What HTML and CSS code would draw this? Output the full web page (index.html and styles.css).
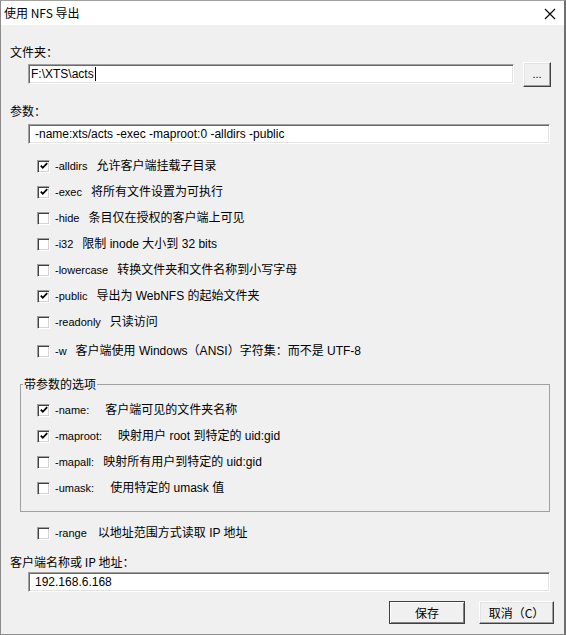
FILE: index.html
```html
<!DOCTYPE html>
<html lang="zh-CN">
<head>
<meta charset="utf-8">
<title>使用 NFS 导出</title>
<link rel="stylesheet" href="styles.css">
</head>
<body>
<div class="window">
  <div class="titlebar">
    <span class="title">使用 NFS 导出</span>
    <svg class="close" width="12" height="12" viewBox="0 0 12 12"><path d="M1 1 L11 11 M11 1 L1 11" stroke="#000" stroke-width="1.1" fill="none"/></svg>
  </div>
  <div class="content">
    <div class="label lbl-folder">文件夹：</div>
    <div class="folder-row">
      <div class="edit edit-folder">F:\XTS\acts<span class="caret"></span></div>
      <button class="btn btn-browse">...</button>
    </div>
    <div class="label lbl-params">参数：</div>
    <div class="edit edit-params">-name:xts/acts -exec -maproot:0 -alldirs -public</div>

    <div class="options">
      <div class="check"><span class="box on"><svg width="8" height="8" viewBox="0 0 8 8"><polyline points="0.8,3.6 2.8,5.8 7.2,1.2" fill="none" stroke="#000" stroke-width="1.8"/></svg></span><span class="opt">-alldirs</span><span class="desc">允许客户端挂载子目录</span></div>
      <div class="check"><span class="box on"><svg width="8" height="8" viewBox="0 0 8 8"><polyline points="0.8,3.6 2.8,5.8 7.2,1.2" fill="none" stroke="#000" stroke-width="1.8"/></svg></span><span class="opt">-exec</span><span class="desc">将所有文件设置为可执行</span></div>
      <div class="check"><span class="box"></span><span class="opt">-hide</span><span class="desc">条目仅在授权的客户端上可见</span></div>
      <div class="check"><span class="box"></span><span class="opt">-i32</span><span class="desc">限制 inode 大小到 32 bits</span></div>
      <div class="check"><span class="box"></span><span class="opt">-lowercase</span><span class="desc">转换文件夹和文件名称到小写字母</span></div>
      <div class="check"><span class="box on"><svg width="8" height="8" viewBox="0 0 8 8"><polyline points="0.8,3.6 2.8,5.8 7.2,1.2" fill="none" stroke="#000" stroke-width="1.8"/></svg></span><span class="opt">-public</span><span class="desc">导出为 WebNFS 的起始文件夹</span></div>
      <div class="check"><span class="box"></span><span class="opt">-readonly</span><span class="desc">只读访问</span></div>
      <div class="check last"><span class="box"></span><span class="opt">-w</span><span class="desc">客户端使用 Windows（ANSI）字符集：而不是 UTF-8</span></div>
    </div>

    <fieldset class="group">
      <legend>带参数的选项</legend>
      <div class="group-rows">
        <div class="check"><span class="box on"><svg width="8" height="8" viewBox="0 0 8 8"><polyline points="0.8,3.6 2.8,5.8 7.2,1.2" fill="none" stroke="#000" stroke-width="1.8"/></svg></span><span class="opt">-name:</span><span class="desc wide">客户端可见的文件夹名称</span></div>
        <div class="check"><span class="box on"><svg width="8" height="8" viewBox="0 0 8 8"><polyline points="0.8,3.6 2.8,5.8 7.2,1.2" fill="none" stroke="#000" stroke-width="1.8"/></svg></span><span class="opt">-maproot:</span><span class="desc wide">映射用户 root 到特定的 uid:gid</span></div>
        <div class="check"><span class="box"></span><span class="opt">-mapall:</span><span class="desc">映射所有用户到特定的 uid:gid</span></div>
        <div class="check"><span class="box"></span><span class="opt">-umask:</span><span class="desc wide">使用特定的 umask 值</span></div>
      </div>
    </fieldset>

    <div class="check range-row"><span class="box"></span><span class="opt">-range</span><span class="desc range-desc">以地址范围方式读取 IP 地址</span></div>

    <div class="label lbl-ip">客户端名称或 IP 地址：</div>
    <div class="edit edit-ip">192.168.6.168</div>

    <div class="actions">
      <button class="btn btn-default">保存</button>
      <button class="btn btn-cancel">取消（C）</button>
    </div>
  </div>
</div>
</body>
</html>
```

FILE: styles.css
```css
html, body {
  margin: 0;
  padding: 0;
  background: #f0f0f0;
}

body {
  font-family: "Liberation Sans", "Noto Sans CJK SC", sans-serif;
  font-size: 12px;
  line-height: 16px;
  color: #000;
}

.window {
  width: 566px;
  height: 635px;
  box-sizing: border-box;
  border: 1px solid #8c8c8c;
  border-right: 2px solid #707070;
  border-top-color: #a0a0a0;
  background: #f0f0f0;
  overflow: hidden;
  display: flex;
  flex-direction: column;
}

.titlebar {
  height: 24px;
  flex: none;
  background: #fff;
  display: flex;
  align-items: center;
  justify-content: space-between;
  padding: 0 8px 0 3px;
}

.title {
  font-family: "Noto Sans CJK SC", sans-serif;
  font-size: 12px;
  line-height: 16px;
}

.close {
  display: block;
  margin-top: 1px;
}

.content {
  padding: 0 10px 0 9px;
}

.label {
  font-family: "Noto Sans CJK SC", sans-serif;
  line-height: 16px;
  height: 16px;
}

.lbl-folder { margin-top: 19px; }
.lbl-params { margin-top: 17px; }
.lbl-ip { margin-top: 8px; }

.folder-row {
  margin-top: 2px;
  height: 24px;
  display: flex;
  align-items: center;
}

.edit {
  box-sizing: border-box;
  height: 20px;
  background: #fff;
  border: 1px solid;
  border-color: #a0a0a0 #ffffff #ffffff #a0a0a0;
  box-shadow: inset 1px 1px 0 #696969, inset -1px -1px 0 #e3e3e3;
  display: flex;
  align-items: center;
  white-space: nowrap;
  overflow: hidden;
  margin-left: 18px;
}

.edit-folder {
  width: 486px;
  padding-left: 2px;
}

.caret {
  display: inline-block;
  width: 1px;
  height: 14px;
  background: #000;
  margin-left: 1px;
}

.edit-params {
  width: 522px;
  margin-top: 5px;
  padding-left: 6px;
}

.edit-ip {
  width: 522px;
  margin-top: 2px;
  padding-left: 6px;
}

.btn {
  font-family: "Noto Sans CJK SC", "Liberation Sans", sans-serif;
  font-size: 12px;
  line-height: 16px;
  color: #000;
  background: #f0f0f0;
  box-sizing: border-box;
  border: 1px solid;
  border-color: #ffffff #404040 #404040 #ffffff;
  box-shadow: inset -1px -1px 0 #a0a0a0, inset 1px 1px 0 #e3e3e3;
  padding: 0;
  margin: 0;
  display: flex;
  align-items: center;
  justify-content: center;
}

.btn-browse {
  width: 28px;
  height: 25px;
  margin-left: 9px;
  font-family: "Liberation Sans", sans-serif;
  font-size: 11px;
  padding-bottom: 1px;
}

.options {
  margin-top: 9px;
}

.check {
  display: flex;
  align-items: center;
  height: 26px;
  padding-left: 27px;
  white-space: nowrap;
}

.check.last {
  margin-top: 3px;
}

.box {
  flex: none;
  width: 13px;
  height: 13px;
  box-sizing: border-box;
  background: #fff;
  border: 1px solid;
  border-color: #a0a0a0 #ffffff #ffffff #a0a0a0;
  box-shadow: inset 1px 1px 0 #404040, inset -1px -1px 0 #d4d4d4;
  display: flex;
  align-items: center;
  justify-content: center;
}

.box svg {
  display: block;
}

.opt {
  font-family: "Liberation Sans", sans-serif;
  font-size: 11px;
  margin-left: 5px;
}

.desc {
  margin-left: 9px;
}

.desc.wide {
  margin-left: 16px;
}

.range-desc {
  margin-left: 11px;
}

.group {
  margin: 12px 0 0 10px;
  padding: 5px 0 10px 2px;
  width: 530px;
  min-inline-size: 0;
  box-sizing: border-box;
  border: 1px solid #a0a0a0;
}

.group legend {
  padding: 0 1px;
  font-family: "Noto Sans CJK SC", sans-serif;
  line-height: 16px;
}

.group-rows .check {
  padding-left: 14px;
}

.range-row {
  margin-top: 8px;
}

.actions {
  margin-top: 9px;
  display: flex;
  justify-content: flex-end;
  gap: 14px;
}

.btn-default {
  width: 76px;
  height: 23px;
  border: 1px solid #404040;
  box-shadow: inset 1px 1px 0 #ffffff, inset -1px -1px 0 #808080;
}

.btn-cancel {
  width: 75px;
  height: 23px;
}
```
